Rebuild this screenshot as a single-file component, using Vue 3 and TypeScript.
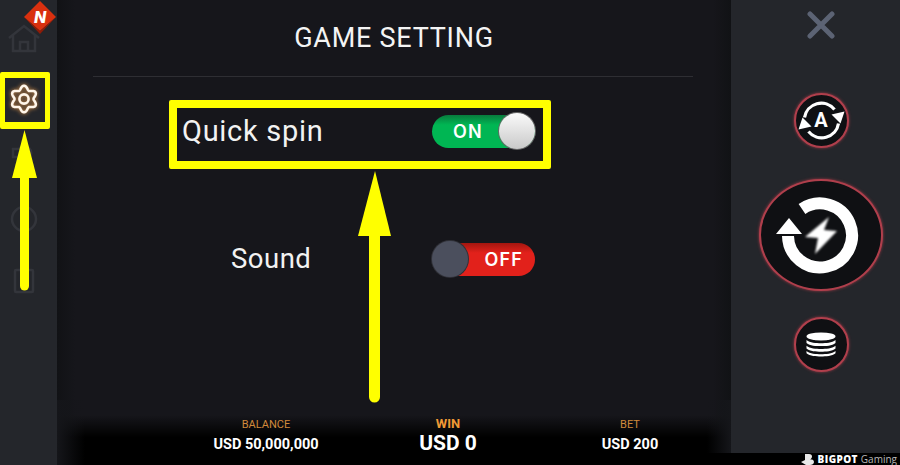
<script setup lang="ts">
const gearPath = (() => {
  const pts: string[] = [];
  for (let i = 0; i < 180; i++) {
    const t = (i / 180) * Math.PI * 2;
    const r = 11.4 - 1.9 * Math.cos(6 * t);
    pts.push(`${(r * Math.cos(t)).toFixed(2)} ${(r * Math.sin(t)).toFixed(2)}`);
  }
  return 'M' + pts.join('L') + 'Z';
})();

const stats = [
  { label: 'BALANCE', value: 'USD 50,000,000', big: false },
  { label: 'WIN', value: 'USD 0', big: true },
  { label: 'BET', value: 'USD 200', big: false },
];
</script>

<template>
  <div class="screen">
    <aside class="side">
      <svg class="dim home" width="34" height="30" viewBox="0 0 34 30" fill="none">
        <path d="M2 15 17 3l15 12M6 12v16h22V12M13 28v-9h8v9" />
      </svg>
      <svg class="gear" width="34" height="34" viewBox="-17 -17 34 34" fill="none">
        <path :d="gearPath" />
        <circle r="4.6" />
      </svg>
      <svg class="dim speaker" width="26" height="26" viewBox="0 0 26 26" fill="none">
        <path d="M2 9h6l6-5v18l-6-5H2zM18 8c3 3 3 7 0 10" />
      </svg>
      <svg class="dim circle" width="28" height="28" viewBox="0 0 28 28" fill="none">
        <circle cx="14" cy="14" r="12" />
      </svg>
      <svg class="dim doc" width="22" height="26" viewBox="0 0 22 26" fill="none">
        <rect x="2" y="2" width="18" height="22" rx="1" />
      </svg>
    </aside>

    <main class="main">
      <header class="head">GAME SETTING</header>
      <div class="row quick">
        <span class="label">Quick spin</span>
        <div class="toggle on"><span class="word">ON</span><span class="knob"></span></div>
      </div>
      <div class="row sound">
        <span class="label">Sound</span>
        <div class="toggle off"><span class="knob"></span><span class="word">OFF</span></div>
      </div>
      <footer class="bar">
        <div v-for="s in stats" :key="s.label" class="stat" :class="{ big: s.big }">
          <span class="stat-label">{{ s.label }}</span>
          <span class="stat-value">{{ s.value }}</span>
        </div>
      </footer>
    </main>

    <div class="right">
      <section class="panel">
        <svg class="close" width="28" height="28" viewBox="0 0 28 28" fill="none">
          <path d="M3 3l22 22M25 3 3 25" />
        </svg>
        <button class="round small auto">
          <svg width="51" height="51" viewBox="-25.500 -25.500 51 51" fill="none">
            <path class="w" d="M-17-3A17 17 0 0 1 13-11" />
            <path class="w" d="M17 3A17 17 0 0 1-13 11" />
            <polygon class="f" points="10,-6 23,-9 19,3" />
            <polygon class="f" points="-10,6 -23,9 -19,-3" />
          </svg>
          <span class="auto-a">A</span>
        </button>
        <button class="round large">
          <svg width="120" height="108" viewBox="-60 -54 120 108" fill="none">
            <path class="arc" d="M-19-26A32 32 0 1 1-33 1" />
            <polygon class="f" points="-32,-17 -45,-1 -19,-1" />
            <polygon class="bolt" points="8,-18 -16,2 -3,3 -6,19 16,-4 3,-5" />
          </svg>
        </button>
        <button class="round small">
          <svg width="36" height="29" viewBox="-18 -18 36 36" preserveAspectRatio="none">
            <ellipse class="f" cx="0" cy="-10" rx="14.5" ry="5" />
            <path class="f" d="M-14.5-5.5C-11-2-5-1.500 0-1.500S11-2 14.500-5.500V-2C11 1.500 5 2 0 2S-11 1.500-14.500-2Z" />
            <path class="f" d="M-14.500 1.500C-11 5-5 5.500 0 5.500S11 5 14.500 1.500V5C11 8.500 5 9 0 9S-11 8.500-14.500 5Z" />
            <path class="f" d="M-14.500 8C-11 11.500-5 12 0 12S11 11.500 14.500 8V11C11 14.500 5 15 0 15S-11 14.500-14.500 11Z" />
          </svg>
        </button>
      </section>
      <div class="brand">
        <svg width="14" height="11" viewBox="0 0 14 11">
          <path d="M4 0h4c2 0 3 1 3 2.500S10 5 9 5.300C11 5.300 13 6 13 8s-2 3-4 3H5L0 8l4-2z" fill="#e8e8e8" />
        </svg>
        <b>BIGPOT</b><span>Gaming</span>
      </div>
    </div>

    <svg class="badge" width="36" height="36" viewBox="0 0 36 36">
      <polygon points="18,2 34,18 18,32 2,18" fill="#d9300f" />
      <polygon points="2,18 18,32 34,18 18,35" fill="#8e1c08" />
      <text x="18" y="23.500" text-anchor="middle" class="badge-n">N</text>
    </svg>

    <div class="hl hl-gear"></div>
    <div class="hl hl-quick"></div>
    <svg class="arrows" width="900" height="465" viewBox="0 0 900 465">
      <polygon points="24.500,130 12,178 37,178" />
      <path d="M20 178h9v108a4.500 4.500 0 0 1-9 0z" />
      <polygon points="375,171 358,236 391,236" />
      <path d="M369 236h11v161a5.500 5.500 0 0 1-11 0z" />
    </svg>
  </div>
</template>

<style>
html, body { margin: 0; background: #000; }
</style>

<style scoped>
.screen {
  position: relative;
  display: flex;
  width: 900px;
  height: 465px;
  overflow: hidden;
  background: #000;
  font-family: Roboto, "Liberation Sans", sans-serif;
}
.side {
  display: flex;
  flex-direction: column;
  align-items: center;
  flex: none;
  box-sizing: border-box;
  width: 57px;
  height: 465px;
  padding: 23px 10px 0 0;
  background: #24262b;
}
.dim path, .dim circle, .dim rect { stroke: #33353b; stroke-width: 2.5; }
.gear { margin-top: 29px; filter: drop-shadow(0 0 2px #e8994a); }
.gear path, .gear circle { stroke: #fff6ea; stroke-width: 2.6; }
.speaker { margin-top: 24px; }
.circle { margin-top: 39px; }
.doc { margin-top: 35px; }

.main {
  display: flex;
  flex-direction: column;
  flex: none;
  width: 674px;
  height: 465px;
  background: linear-gradient(90deg, #111215 0, #16161b 18px, #16161b calc(100% - 18px), #111215 100%);
}
.head {
  flex: none;
  box-sizing: border-box;
  height: 77px;
  margin: 0 38px 0 36px;
  padding: 21px 0 0 2px;
  border-bottom: 1px solid #2e2e33;
  color: #f4f4f4;
  font-size: 27px;
  line-height: 34px;
  letter-spacing: .75px;
  text-align: center;
}
.row {
  display: flex;
  align-items: center;
  flex: none;
  height: 34px;
  padding-left: 125px;
}
.quick { margin-top: 37px; }
.sound { margin-top: 94px; }
.label {
  box-sizing: border-box;
  width: 250px;
  color: #f2f2f2;
  font-family: Roboto, sans-serif;
  font-size: 29px;
  letter-spacing: .7px;
  line-height: 34px;
}
.sound .label { padding-left: 49px; font-size: 27.5px; letter-spacing: .5px; }
.toggle {
  display: flex;
  align-items: center;
  justify-content: space-between;
  box-sizing: border-box;
  width: 103px;
  height: 33px;
  border-radius: 17px;
}
.on { background: linear-gradient(#087c3d, #00b653 30%, #00b653); }
.off { background: linear-gradient(#a3160f, #e2211b 30%, #e2211b); }
.word {
  color: #fff;
  font-family: Inter, sans-serif;
  font-size: 18px;
  font-weight: 600;
  letter-spacing: 1.2px;
}
.on .word { margin-left: 21px; }
.off .word { margin-right: 12px; }
.knob {
  flex: none;
  width: 36px;
  height: 36px;
  margin: -2px 0;
  border-radius: 50%;
}
.on .knob {
  background: linear-gradient(#fafafa, #c9c9c9);
  box-shadow: 0 0 0 1px #666;
}
.off .knob {
  background: #4b4f5d;
  box-shadow: 0 0 0 1px #303138;
}
.bar {
  display: grid;
  grid-template-columns: repeat(3, 182px);
  box-sizing: border-box;
  height: 65px;
  margin-top: auto;
  padding: 15px 0 0 118px;
  background:
    linear-gradient(90deg, #15161a 0, rgba(21, 22, 26, 0) 28px) no-repeat,
    linear-gradient(270deg, #15161a 0, rgba(21, 22, 26, 0) 24px) 0 0 / 100% 53px no-repeat,
    linear-gradient(rgba(0, 0, 0, 0) 15px, #000 37px);
}
.stat {
  display: flex;
  flex-direction: column;
  align-items: center;
  height: 40px;
  justify-content: flex-end;
}
.stat-label {
  color: #d08a3b;
  font-size: 11px;
  line-height: 13px;
  margin-bottom: 5px;
}
.stat-value {
  color: #fff;
  font-size: 14.5px;
  font-weight: 700;
  line-height: 18px;
  margin-bottom: 1px;
}
.big .stat-label {
  color: #f09a35;
  font-size: 13px;
  font-weight: 700;
  line-height: 15px;
  margin-bottom: 0;
}
.big .stat-value { font-size: 21px; line-height: 25px; margin-bottom: -1px; }

.right { display: flex; flex-direction: column; flex: 1; height: 465px; }
.panel {
  display: flex;
  flex-direction: column;
  align-items: center;
  height: 453px;
  box-sizing: border-box;
  padding: 11px 0 0 11px;
  background: #24262b;
}
.close path { stroke: #5c6374; stroke-width: 5; stroke-linecap: round; }
.round {
  position: relative;
  display: flex;
  align-items: center;
  justify-content: center;
  box-sizing: border-box;
  flex: none;
  padding: 0;
  border: 2px solid #b03f4c;
  border-radius: 50%;
  background: #0f1013;
  box-shadow: 0 0 3px #a03a46;
}
.small { width: 55px; height: 55px; }
.large { width: 124px; height: 112px; margin: 31px 0 26px; }
.auto { margin-top: 54px; }
.round svg { flex: none; }
.w { stroke: #fff; stroke-width: 3.200; }
.f { fill: #fff; }
.arc { stroke: #fff; stroke-width: 12; }
.bolt { fill: #fff; filter: blur(1.2px); }
.auto-a {
  position: absolute;
  left: 0;
  right: 0;
  top: 15px;
  color: #fff;
  font-family: Roboto, sans-serif;
  font-size: 20px;
  font-weight: 700;
  line-height: 21px;
  text-align: center;
}
.brand {
  display: flex;
  align-items: center;
  justify-content: flex-end;
  gap: 3px;
  height: 12px;
  padding-right: 3px;
  color: #fff;
  font-size: 10px;
  line-height: 12px;
}
.brand b { font-family: "Open Sans", sans-serif; font-weight: 800; letter-spacing: .4px; }
.brand span { color: #b9b9b9; font-family: "Open Sans", sans-serif; }

.badge { position: absolute; left: 22px; top: -1px; }
.badge-n {
  fill: #fff;
  font-family: Inter, sans-serif;
  font-size: 16px;
  font-style: italic;
  font-weight: 800;
}
.hl { position: absolute; box-sizing: border-box; border: solid #ffff00; border-radius: 2px; }
.hl-gear { left: 0; top: 72px; width: 50px; height: 57px; border-width: 6px 5px 7px; }
.hl-quick { left: 169px; top: 100px; width: 382px; height: 69px; border-width: 8px; }
.arrows { position: absolute; left: 0; top: 0; fill: #ffff00; pointer-events: none; }
</style>
